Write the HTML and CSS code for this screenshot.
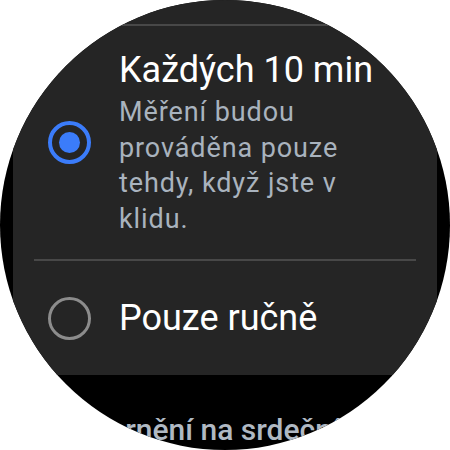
FILE: index.html
```html
<!DOCTYPE html>
<html lang="cs">
<head>
<meta charset="utf-8">
<title>Měření</title>
<link rel="stylesheet" href="styles.css">
</head>
<body>
<div class="watch">
  <div class="card">
    <div class="divider"></div>
    <div class="option">
      <span class="radio radio-on"><span class="dot"></span></span>
      <div class="text">
        <div class="title">Každých 10 min</div>
        <div class="desc">Měření budou prováděna pouze tehdy, když jste v klidu.</div>
      </div>
    </div>
    <div class="divider"></div>
    <div class="option option-short">
      <span class="radio radio-off"></span>
      <div class="text">
        <div class="title">Pouze ručně</div>
      </div>
    </div>
  </div>
  <div class="next">Upozornění na srdeční tep</div>
</div>
</body>
</html>
```
FILE: styles.css
```css
html, body {
  margin: 0;
  padding: 0;
  background: #ffffff;
}
.watch {
  width: 450px;
  height: 450px;
  border-radius: 50%;
  background: #000000;
  overflow: hidden;
  font-family: Roboto, "Noto Sans", sans-serif;
}
.card {
  margin: 0 13px;
  padding: 24px 21px 0;
  background: #252525;
  border-radius: 0 0 22px 22px;
  display: flex;
  flex-direction: column;
}
.divider {
  height: 2px;
  background: #484848;
}
.option {
  display: flex;
  align-items: center;
  padding: 22px 0;
}
.option-short {
  padding: 35px 0;
}
.radio {
  flex: none;
  box-sizing: border-box;
  width: 43px;
  height: 43px;
  border-radius: 50%;
  margin-left: 14px;
  margin-right: 28px;
  display: flex;
  align-items: center;
  justify-content: center;
}
.radio-on {
  border: 4px solid #3b7cfa;
}
.radio-on .dot {
  width: 21px;
  height: 21px;
  border-radius: 50%;
  background: #3b7cfa;
}
.radio-off {
  border: 3px solid #8c8c8c;
}
.text {
  display: flex;
  flex-direction: column;
  gap: 3px;
}
.title {
  font-size: 36px;
  line-height: 44px;
  color: #ffffff;
}
.desc {
  font-size: 27px;
  line-height: 35.5px;
  letter-spacing: 0.9px;
  color: #a9b3be;
  width: 250px;
}
.next {
  margin-top: 37px;
  padding-left: 40px;
  font-size: 30px;
  line-height: 36px;
  font-weight: 500;
  color: #b0b9c3;
  white-space: nowrap;
}
```
